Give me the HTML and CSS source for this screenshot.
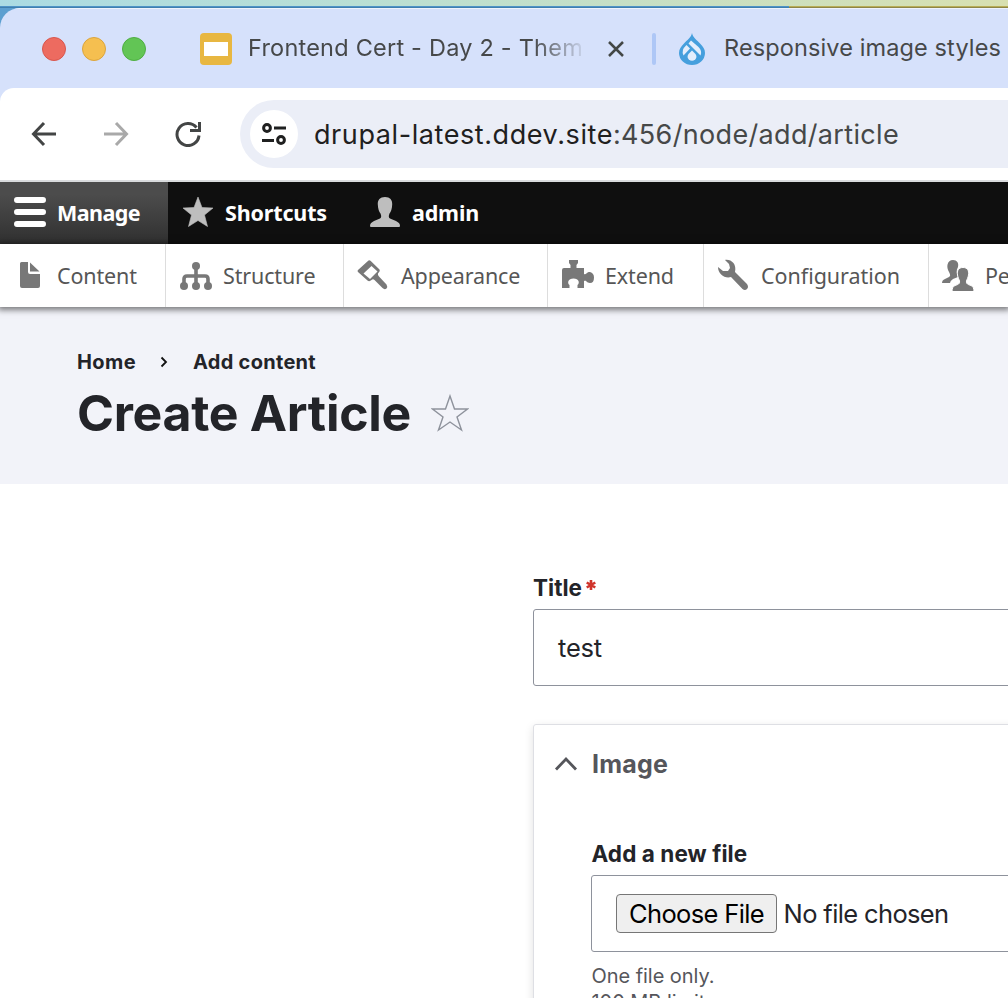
FILE: index.html
```html
<!DOCTYPE html>
<html lang="en">
<head>
<meta charset="utf-8">
<title>Create Article</title>
<link rel="stylesheet" href="styles.css">
</head>
<body>
<div class="desktop">
<div class="window">
  <div class="tabs">
    <div class="lights"><i class="light red"></i><i class="light yellow"></i><i class="light green"></i></div>
    <svg class="slides" viewBox="0 0 32 32"><rect width="32" height="32" rx="4" fill="#e8b741"/><rect x="4" y="9" width="24" height="14" fill="#fff"/></svg>
    <div class="tab-title fade">Frontend Cert - Day 2 - Them</div>
    <svg class="close" viewBox="0 0 16 16"><path d="M1 1l14 14M15 1L1 15" stroke="#434746" stroke-width="2.500"/></svg>
    <i class="tab-sep"></i>
    <svg class="drop" viewBox="0 0 26 32"><path d="M13 0C12 5 8 7 5 10.500C2 13.500 0 16 0 20A13 12 0 0 0 26 20C26 16 24 13.500 21 10.500C18 7 14 5 13 0Z" fill="#459fdd"/><g fill="#e4eefc"><path d="M12 7.500L19.500 14Q23.500 18 21.500 22.500L9.500 10.500Z"/><path d="M7.500 12L11 15.500L4.500 22.500Q1.800 17 7.500 12Z"/><path d="M13 17.500L16.500 21Q18.500 24 16.200 26.500Q13 29 9.800 26.500Q7.500 24 9.500 21Z"/></g></svg>
    <span class="tab-title second">Responsive image styles</span>
  </div>
  <div class="nav">
    <svg class="nav-ico" viewBox="0 0 26 26"><path d="M25 13H3M13 2L2.500 13L13 24" fill="none" stroke="#434545" stroke-width="3"/></svg>
    <svg class="nav-ico" viewBox="0 0 26 26"><path d="M1 13H23M13 2L23.500 13L13 24" fill="none" stroke="#a9a9a9" stroke-width="3"/></svg>
    <svg class="nav-ico" viewBox="0 0 26 26"><path d="M21.500 6.500A11 11 0 1 0 24 14.500" fill="none" stroke="#434545" stroke-width="3"/><path d="M24.500 1V9.500H15" fill="none" stroke="#434545" stroke-width="3"/></svg>
    <div class="omnibox">
      <div class="site-info"><svg viewBox="0 0 24 22"><g fill="none" stroke="#1f2020" stroke-width="3"><circle cx="5" cy="5" r="3.400"/><path d="M12 5H24M0 17.500H12"/><circle cx="19" cy="17" r="3.400"/></g></svg></div>
      <span class="url"><span class="host">drupal-latest.ddev.site</span>:456/node/add/article</span>
    </div>
  </div>
  <div class="admin-bar">
    <div class="bar-item active"><svg viewBox="0 0 32 30"><path d="M3 3H29M3 15H29M3 27H29" stroke="#fff" stroke-width="6" stroke-linecap="round"/></svg><span class="manage">Manage</span></div>
    <div class="bar-item shortcuts"><svg viewBox="0 0 30 30"><path d="M15 0L19 10.500L30 11L21.500 18L24.500 29.500L15 23.500L5.500 29.500L8.500 18L0 11L11 10.500Z" fill="#bebebe" stroke="#bebebe" stroke-width=".6"/></svg><span>Shortcuts</span></div>
    <div class="bar-item user"><svg viewBox="0 0 30 30"><path d="M15 0C20 0 22.500 3 22.200 7.500C22 12 21 14.500 19.500 16.500C18.500 19 18.500 20.500 20 21.500L26 24C29 25.500 30 27 30 29Q30 30 29 30H1Q0 30 0 29C0 27 1 25.500 4 24L10 21.500C11.500 20.500 11.500 19 10.500 16.500C9 14.500 8 12 7.800 7.500C7.500 3 10 0 15 0Z" fill="#bebebe"/></svg><span>admin</span></div>
  </div>
  <div class="tray">
    <div class="tray-item c1"><svg viewBox="0 0 32 32"><path d="M7.500 3H14V13Q14 15 16 15H26V27Q26 29 24 29H8Q6 29 6 27V4.500Q6 3 7.500 3ZM16 3.500L25.500 12.500H16Z" fill="#787878"/></svg><span>Content</span></div>
    <div class="tray-item c2"><svg viewBox="0 0 32 32"><g fill="#787878"><circle cx="16" cy="7" r="4"/><circle cx="4" cy="27" r="4"/><circle cx="16" cy="27" r="4"/><circle cx="28" cy="27" r="4"/></g><path d="M16 7V27M4 27V20Q4 17 7 17H25Q28 17 28 20V27" fill="none" stroke="#787878" stroke-width="3.600"/></svg><span>Structure</span></div>
    <div class="tray-item c3"><svg viewBox="0 0 32 32"><path d="M11.500 1.500Q12.500 .8 13.500 1.800L22.500 10.500Q23 11.500 22.500 12.500L21 14.500Q20.500 16 22 17.500L29.500 25.500Q31 28 29.500 29.500Q27.500 31 25.500 29L17.500 21Q16 19.500 14.500 21Q12.500 23 10.500 21.500L1 13Q0 12 1 11ZM14.500 7L6.500 14.500L13 20L20.500 12.500Z" fill="#787878" fill-rule="evenodd"/></svg><span>Appearance</span></div>
    <div class="tray-item c4"><svg viewBox="0 0 32 32"><path d="M7 1H16V4L14.500 6V9H22V15C25 16 24 13 28 13Q32 14 32 18.500Q32 24 28 24C24 24 25 21 22 22V29H15.500V26C18 24 17 19.500 11.500 19.500S5 24 7.500 26V29H0V11Q0 9 2 9H8.500V6L7 4Z" fill="#787878"/></svg><span>Extend</span></div>
    <div class="tray-item c5"><svg viewBox="0 0 32 32"><path d="M8 1C14 0 20 5 18 13L30 25Q32 28 30 30Q28 32 25.500 30L14 18C8 20 1 15 1 8L6 12H11L13 9L12 5Z" fill="#787878"/></svg><span>Configuration</span></div>
    <div class="tray-item c6"><svg viewBox="0 0 32 32"><g fill="#787878"><path d="M11 1C15 1 17 4 16 8C14 11 14.500 15 16 18L11 20Q8 22 8 24H0Q0 21 3 20L7 18C9 17 8 15 7 13C4 8 5 1 11 1Z"/><path stroke="#fff" stroke-width="1" d="M21 8.500C26 8.500 27 12 26.500 16C26 19 25 20 24.500 22C24 25 26 25.500 29 26.500C31 27.500 32 29 32 33H10C10 29 11 27.500 13 26.500C16 25.500 18 25 17.500 22C17 20 16 19 15.500 16C15 12 16 8.500 21 8.500Z"/></g></svg><span>People</span></div>
  </div>
  <header class="page-head">
    <nav class="crumbs"><span class="home">Home</span><svg viewBox="0 0 8 12"><path d="M1.500 1.500L6 6L1.500 10.500" fill="none" stroke="#111" stroke-width="1.800"/></svg><span>Add content</span></nav>
    <div class="title-row"><h1>Create Article</h1><svg viewBox="0 0 38 38"><path d="M19 2L23.500 15H36.500L26 23L30.500 36L19 28L7.500 36L12 23L1.500 15H14.500Z" fill="none" stroke="#8e929c" stroke-width="1.400"/></svg></div>
  </header>
  <main class="form">
    <div class="label title-label"><span>Title</span><svg viewBox="0 0 10 10"><path d="M5 0V10M.7 2.500L9.300 7.500M9.300 2.500L.7 7.500" stroke="#d0342c" stroke-width="2.600"/></svg></div>
    <div class="input">test</div>
    <section class="details">
      <div class="summary"><svg viewBox="0 0 24 16"><path d="M2 13.500L12 3L22 13.500" fill="none" stroke="#55565b" stroke-width="2.800"/></svg><span>Image</span></div>
      <div class="label">Add a new file</div>
      <div class="input file"><span class="choose">Choose File</span><span>No file chosen</span></div>
      <div class="hint">One file only.<br>100 MB limit.</div>
    </section>
  </main>
</div>
</div>
</body>
</html>
```
FILE: styles.css
```css
* { box-sizing: border-box; }
body { margin: 0; width: 1008px; height: 998px; overflow: hidden; font-family: Inter, "Liberation Sans", sans-serif; color: #232429; background: #fff; }
svg { display: block; flex: none; }
.desktop { height: 998px; padding-top: 8px; overflow: hidden; background: linear-gradient(90deg, #3f7fae 0 789px, #8c8548 789px) 0 7px / 100% 1px no-repeat, linear-gradient(90deg, #4f93c6 0 789px, #b8ad55 789px) 0 6px / 100% 1px no-repeat, linear-gradient(90deg, #abdbe3, #b9dfd4 35%, #d8e0b0) 0 0 / 100% 6px no-repeat, #5c9fd0; }
.window { height: 990px; background: #d6e1fb; border-radius: 20px 0 0 0; overflow: hidden; }
.tabs { display: flex; align-items: center; height: 80px; padding-left: 42px; border-top: 1px solid #eef3fd; white-space: nowrap; }
.lights { display: flex; gap: 16px; margin-right: 54px; }
.light { width: 24px; height: 24px; border-radius: 50%; border: 1px solid; }
.red { background: #ed6b60; border-color: #d8564d; }
.yellow { background: #f5bf50; border-color: #dba43c; }
.green { background: #62c555; border-color: #4fae42; }
.slides { width: 32px; height: 32px; }
.tab-title { padding-bottom: 2px; font-size: 23.5px; line-height: 32px; letter-spacing: .22px; color: #464849; }
.second { letter-spacing: .118px; }
.fade { width: 337px; margin-left: 16px; overflow: hidden; -webkit-mask-image: linear-gradient(90deg, #000 285px, transparent 340px); mask-image: linear-gradient(90deg, #000 285px, transparent 340px); }
.close { width: 16px; height: 16px; margin-left: 23px; }
.tab-sep { width: 4px; height: 32px; margin-left: 28px; border-radius: 2px; background: #aec7f6; }
.drop { width: 26px; height: 32px; margin: 0 19px 0 23px; }
.nav { display: flex; align-items: center; height: 94px; padding-left: 31px; border-bottom: 2px solid #d9dbdd; border-radius: 14px 0 0 0; background: #fff; }
.nav-ico { width: 26px; height: 26px; margin-right: 46px; }
.omnibox { display: flex; align-items: center; flex: 1; height: 68px; margin-left: -7px; padding-left: 10px; border-radius: 34px 0 0 34px; background: #ebeef7; }
.site-info { display: flex; align-items: center; justify-content: center; width: 48px; height: 48px; border-radius: 50%; background: #fff; }
.site-info svg { width: 24px; height: 22px; }
.url { margin-left: 16px; font-size: 27px; letter-spacing: .332px; white-space: nowrap; color: #464848; }
.host { letter-spacing: .582px; color: #1f2020; }
.admin-bar { display: flex; height: 62px; padding-bottom: 0; background: #0f0f0f; color: #fff; font: 700 21.500px "Noto Sans", sans-serif; }
.bar-item { display: flex; align-items: center; gap: 12px; padding: 0 0 2px 15px; letter-spacing: -.16px; white-space: nowrap; }
.bar-item svg { height: 30px; width: 30px; }
.active { width: 168px; padding-left: 14px; gap: 11px; background: linear-gradient(#4c4c4c 20%, #303030); }
.active svg { width: 32px; }
.manage { letter-spacing: -.573px; }
.user { padding-left: 43px; }
.tray { display: flex; height: 63px; background: #fff; color: #565656; font: 400 21.500px "Noto Sans", sans-serif; letter-spacing: -.14px; position: relative; box-shadow: 0 1px 6px 2px rgba(0,0,0,.5); }
.tray-item { display: flex; align-items: center; flex: none; padding: 0 0 1px 14px; gap: 11px; border-right: 1px solid #ddd; white-space: nowrap; }
.tray-item svg { width: 32px; height: 32px; }
.c1 { width: 166px; }
.c2 { width: 178px; }
.c3 { width: 204px; padding-left: 13px; gap: 12px; }
.c4 { width: 156px; }
.c5 { width: 225px; padding-left: 13px; gap: 12px; letter-spacing: -.035px; }
.c6 { width: 160px; padding-left: 13px; }
.page-head { height: 177px; padding: 42px 0 0 77px; background: #f2f3f9; }
.crumbs { display: flex; align-items: center; height: 26px; font-size: 20px; font-weight: 700; letter-spacing: .297px; white-space: nowrap; }
.crumbs svg { width: 8px; height: 12px; margin: 0 25px 0 24px; }
.home { letter-spacing: .406px; }
.title-row { display: flex; align-items: center; gap: 20px; height: 76px; }
h1 { margin: 0; font-size: 50px; letter-spacing: -.298px; white-space: nowrap; }
.title-row svg { width: 38px; height: 38px; }
.form { height: 514px; overflow: hidden; padding: 89px 0 0 533px; white-space: nowrap; background: #fff; }
.label { display: flex; font-size: 22.500px; font-weight: 700; line-height: 30px; letter-spacing: .02px; }
.title-label svg { width: 10px; height: 10px; margin: 7px 0 0 4px; }
.input { display: flex; align-items: center; width: 500px; height: 77px; margin-top: 6px; padding-left: 24px; border: 1px solid #8e929c; border-radius: 3px; font-size: 25.500px; letter-spacing: -.191px; }
.details { width: 500px; height: 310px; margin-top: 38px; padding-left: 57px; border: 1px solid #dedfe4; border-radius: 3px; box-shadow: 0 3px 10px rgba(0,0,0,.12); }
.summary { display: flex; align-items: center; height: 78px; margin-left: -37px; gap: 14px; font-size: 25px; font-weight: 700; letter-spacing: .191px; color: #55565b; }
.summary svg { width: 24px; height: 16px; }
.details .label { margin-top: 36px; padding-left: .5px; letter-spacing: .08px; }
.file { letter-spacing: -.635px; }
.choose { padding: 0 12px; border: 1px solid #767676; border-radius: 4px; background: #efefef; color: #000; line-height: 37px; margin-right: 6.500px; }
.hint { margin-top: 11px; padding-left: .5px; font-size: 20px; line-height: 26px; letter-spacing: -.05px; color: #55565b; }
```
